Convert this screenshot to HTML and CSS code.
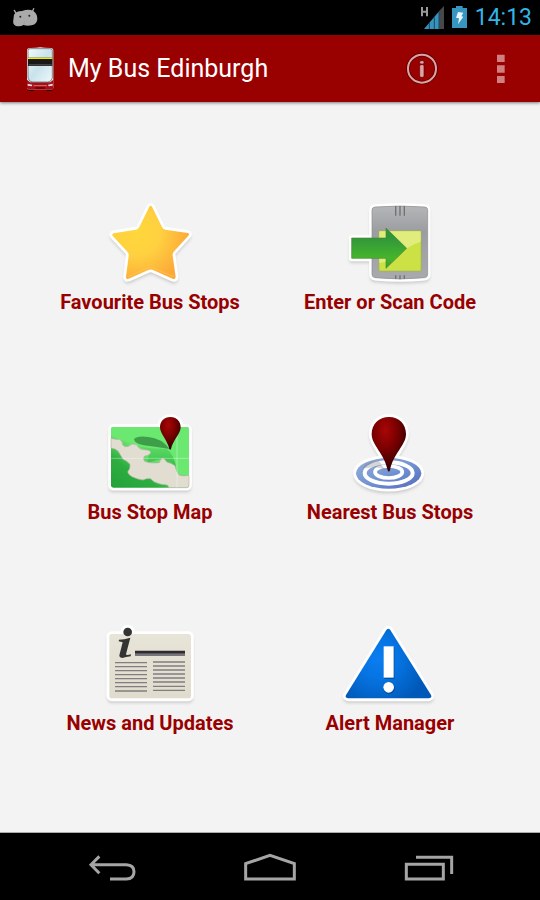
FILE: index.html
```html
<!DOCTYPE html>
<html lang="en">
<head>
<meta charset="utf-8">
<meta name="viewport" content="width=device-width, initial-scale=1">
<title>My Bus Edinburgh</title>
<link rel="stylesheet" href="styles.css">
</head>
<body>
<div class="status">
  <svg class="status-robot" viewBox="36 21 81 63" aria-hidden="true">
    <path d="M43 31l7 12M101 26l-5 11" stroke="#aaa" stroke-width="4" stroke-linecap="round"/>
    <path d="M42 44Q47 34 66 33Q86 26 100 33Q112 41 112 56Q112 72 95 76Q82 79 70 75Q62 81 48 78Q37 74 40 60Z" fill="#aaa"/>
    <circle cx="61" cy="50" r="3" fill="#222"/><circle cx="88" cy="47" r="3" fill="#222"/>
    <path d="M71 75Q74 70 73 64" fill="none" stroke="#999" stroke-width="2"/>
  </svg>
  <div class="status-right">
    <svg class="status-signal" viewBox="87 15 72 75" aria-hidden="true">
      <path d="M93 21v28M108 21v28M93 35h15" fill="none" stroke="#999" stroke-width="6"/>
      <path d="M145 32L159 18V87H145Z" fill="#484848"/>
      <path d="M99 87L145 33V87Z" fill="#3793bd"/>
      <path d="M115 69v18M130 52v35M144 35v52" stroke="#174a62" stroke-width="3"/>
    </svg>
    <svg class="status-battery" viewBox="183 15 45 75" aria-hidden="true">
      <path d="M195 18h20v6h13v60h-45V24h12z" fill="#3696bf"/>
      <path d="M201 36l16 2-6 11 6 1-16 23 3-18-9-2z" fill="#e9f5fa"/>
    </svg>
    <span class="clock">14:13</span>
  </div>
</div>
<header class="bar">
  <svg class="logo" viewBox="72 132 96 147" aria-hidden="true">
    <defs><linearGradient id="glass" x1="0" y1="0" x2="1" y2="1"><stop offset="0" stop-color="#f4fbfd"/><stop offset=".5" stop-color="#c9e2eb"/><stop offset="1" stop-color="#eef8fb"/></linearGradient></defs>
    <rect x="83" y="262" width="20" height="11" rx="4" fill="#260000"/><rect x="138" y="262" width="20" height="11" rx="4" fill="#260000"/>
    <path d="M81 150Q82 144 90 144L108 143Q121 140 134 143L152 144Q159 144 160 150V264Q159 269 152 269H90Q82 269 81 264Z" fill="#efeeee"/>
    <path d="M81 239L90 247H151L160 239V264Q159 269 152 269H90Q82 269 81 264Z" fill="#a60f19"/>
    <path d="M84 151Q85 146 92 146H149Q156 146 157 151V234Q154 246 143 246H98Q87 246 84 234Z" fill="url(#glass)" stroke="#46555b" stroke-width="2"/>
    <path d="M84 173h73v25H84z" fill="#181818"/><path d="M84 173h73v4H84z" fill="#f5ed00"/><path d="M86 192h69v5H86z" fill="#444"/>
    <path d="M83 251l14 3-2 5-12-2zM158 251l-14 3 2 5 12-2z" fill="#eadada"/>
    <path d="M100 257h41" stroke="#d86c70" stroke-width="3"/><path d="M106 264h29" stroke="#6b0006" stroke-width="5"/>
  </svg>
  <h1>My Bus Edinburgh</h1>
  <button class="action" aria-label="About">
    <svg class="info-icon" viewBox="48 159 93 93" aria-hidden="true">
      <circle cx="96" cy="206" r="42" fill="none" stroke="#5b0000" stroke-width="11"/>
      <circle cx="96" cy="206" r="42" fill="none" stroke="#dfa3a3" stroke-width="6"/>
      <rect x="89" y="182" width="13" height="10" rx="4" fill="#dfa3a3" stroke="#5b0000" stroke-width="2"/>
      <rect x="89" y="194" width="13" height="38" rx="4" fill="#dfa3a3" stroke="#5b0000" stroke-width="2"/>
    </svg>
  </button>
  <button class="action" aria-label="More options">
    <svg class="more-icon" viewBox="318 162 27 87" aria-hidden="true"><path d="M321 164h23v22h-23zM321 196h23v22h-23zM321 228h23v21h-23z" fill="#d17f7f"/></svg>
  </button>
</header>
<main class="grid">
  <button class="tile">
    <svg class="art" viewBox="165 27 270 270" aria-hidden="true">
      <defs><radialGradient id="gold" gradientUnits="userSpaceOnUse" cx="262" cy="125" r="155"><stop offset="0" stop-color="#ffd73b"/><stop offset=".45" stop-color="#ffd040"/><stop offset="1" stop-color="#fca938"/></radialGradient>
      <path id="star" d="M298 47Q302 42 306 47L336 108Q339 115 346 116L413 126Q420 128 415 134L371 182Q367 187 368 194L377 258Q376 266 368 263L309 237Q302 234 295 237L236 263Q228 266 228 258L236 194Q237 187 232 182L189 136Q184 129 191 127L258 116Q265 115 268 108Z"/></defs>
      <use href="#star" class="shade"/><use href="#star" class="rim"/><use href="#star" fill="url(#gold)"/>
      <path d="M234 257L293 231Q302 227 311 231L370 257" fill="none" stroke="#ffc65a" stroke-width="2"/>
    </svg>
    <span>Favourite Bus Stops</span>
  </button>
  <button class="tile">
    <svg class="art" viewBox="135 27 270 270" aria-hidden="true">
      <defs><linearGradient id="steel" x1="0" y1="0" x2="0" y2="1"><stop offset="0" stop-color="#b5b6b8"/><stop offset=".35" stop-color="#9c9da0"/><stop offset="1" stop-color="#a9aaad"/></linearGradient>
      <linearGradient id="leaf" x1="0" y1="0" x2="0" y2="1"><stop offset=".2" stop-color="#2f943b"/><stop offset=".75" stop-color="#46b52b"/><stop offset="1" stop-color="#349b31"/></linearGradient>
      <path id="device" d="M216 57Q216 49 225 48Q300 42 375 48Q383 49 383 57V250Q383 259 374 260Q300 268 225 260Q216 259 216 250Z"/>
      <path id="arrow" d="M155 141H258V111L320 172L258 232V202H155Z"/>
      <path id="shaft" d="M155 141H230V202H155Z"/></defs>
      <use href="#device" class="shade"/><use href="#shaft" class="shade"/><use href="#device" class="rim"/><use href="#shaft" class="rim"/>
      <use href="#device" fill="url(#steel)" stroke="#8c8d90" stroke-width="2"/>
      <path d="M287 45v29M300 45v29M313 45v29M287 253v11M300 253v12M313 253v11" stroke="#707174" stroke-width="4"/>
      <rect x="237" y="120" width="126" height="120" rx="3" fill="#cce244" stroke="#a5b83d" stroke-width="2"/>
      <path d="M238 121H362V152Q325 164 300 190Q270 213 238 216Z" fill="#e0ed7c"/>
      <use href="#arrow" fill="url(#leaf)" stroke="#4a8a36" stroke-width="2"/>
    </svg>
    <span>Enter or Scan Code</span>
  </button>
  <button class="tile">
    <svg class="art" viewBox="105 15 270 270" aria-hidden="true">
      <defs><linearGradient id="field" x1="0" y1="1" x2=".8" y2="0"><stop offset="0" stop-color="#23a13a"/><stop offset=".3" stop-color="#2dad40"/><stop offset=".55" stop-color="#65df69"/><stop offset="1" stop-color="#6ce971"/></linearGradient>
      <radialGradient id="ruby" cx=".4" cy=".25" r=".7"><stop offset="0" stop-color="#a90606"/><stop offset=".5" stop-color="#790000"/><stop offset="1" stop-color="#370000"/></radialGradient>
      <linearGradient id="hill" x1="0" y1="0" x2="0" y2="1"><stop offset="0" stop-color="#68e66e"/><stop offset="1" stop-color="#33b545"/></linearGradient>
      <rect id="sheet" x="123" y="66" width="234" height="182" rx="7"/>
      <path id="mappin" d="M301 36C320 36 332 50 332 67C332 86 308 107 303 132Q301 137 298 132C293 107 270 86 270 67C270 50 282 36 301 36Z"/></defs>
      <use href="#sheet" class="shade"/><use href="#sheet" class="rim"/><circle cx="301" cy="67" r="31" class="rim"/>
      <use href="#sheet" fill="url(#field)"/>
      <path d="M123 73Q123 66 130 66H350Q357 66 357 73V212L325 208L300 160Q230 150 170 111L123 94Z" fill="#6be870"/>
      <path d="M150 103Q205 133 290 132Q315 148 320 200L280 160L232 173L238 140L190 118Z" fill="url(#hill)"/>
      <path d="M192 103Q201 91 235 96Q274 99 299 132Q260 126 222 121Q194 116 192 103Z" fill="#3e9e49"/>
      <path d="M123 100Q136 104 148 103Q158 108 158 120Q165 128 175 124Q187 113 201 120Q207 134 220 134Q239 134 242 141Q241 151 224 153Q217 160 224 169Q239 176 268 173Q271 162 279 160Q285 162 290 171Q305 175 315 182Q319 200 327 210Q341 215 357 211V241Q357 248 350 248H296Q297 239 286 239Q273 239 264 235Q250 231 242 221Q229 219 219 225Q205 224 190 217Q176 211 173 201Q182 190 180 178Q171 167 159 163Q151 149 144 138Q136 130 123 129Z" fill="#e1ddd0" stroke="#b5b7a1" stroke-width="2"/>
      <path d="M123 160H357M321 66V248" stroke="#fff" stroke-opacity=".35" stroke-width="3"/>
      <use href="#mappin" fill="url(#ruby)"/>
    </svg>
    <span>Bus Stop Map</span>
  </button>
  <button class="tile">
    <svg class="art" viewBox="135 15 270 270" aria-hidden="true">
      <defs><linearGradient id="water" x1="0" y1="0" x2="1" y2="1"><stop offset="0" stop-color="#96b1d6"/><stop offset=".5" stop-color="#7494d3"/><stop offset="1" stop-color="#5269bd"/></linearGradient>
      <ellipse id="pool" cx="266" cy="205" rx="98" ry="46"/>
      <path id="bigpin" d="M267 36C297 36 318 58 318 87C318 121 279 146 270 196Q267 204 263 196C254 146 215 121 215 87C215 58 237 36 267 36Z"/></defs>
      <use href="#pool" class="shade"/><use href="#bigpin" class="shade"/><use href="#pool" class="rim"/><use href="#bigpin" class="rim"/>
      <use href="#pool" fill="url(#water)"/>
      <ellipse cx="266" cy="204" rx="72" ry="32" fill="none" stroke="#fff" stroke-width="12"/>
      <ellipse cx="266" cy="201" rx="41" ry="18" fill="none" stroke="#fff" stroke-width="11"/>
      <path d="M187 190Q196 170 236 166L256 196Q230 181 201 190Z" fill="#777" fill-opacity=".3"/>
      <use href="#bigpin" fill="url(#ruby)"/>
    </svg>
    <span>Nearest Bus Stops</span>
  </button>
  <button class="tile">
    <svg class="art" viewBox="135 18 270 270" aria-hidden="true">
      <defs><linearGradient id="paper" x1="0" y1="0" x2="0" y2="1"><stop offset="0" stop-color="#e7e4d8"/><stop offset="1" stop-color="#e0dccd"/></linearGradient>
      <rect id="page" x="148" y="57" width="245" height="193" rx="8"/></defs>
      <use href="#page" class="shade"/><use href="#page" class="rim"/><circle cx="203" cy="51" r="13" class="rim"/>
      <use href="#page" fill="url(#paper)"/>
      <circle cx="203" cy="51" r="13" fill="#333"/>
      <path d="M177 74Q192 74 211 68L198 118Q198 122 213 118L212 124Q197 126 187 129Q175 128 179 117L188 82L176 79Z" fill="#333"/>
      <path d="M225 107h150v9H225z" fill="#2c2a2e"/><path d="M225 117h150v6H225z" fill="#77747b"/>
      <path d="M165 143h96M165 155h96M165 167h96M165 179h96M165 191h96M165 203h96M165 215h96M165 228h96M279 141h96M279 153h96M279 165h96M279 177h96M279 189h96M279 201h96M279 214h96M279 226h96" stroke="#817d80" stroke-width="4"/>
    </svg>
    <span>News and Updates</span>
  </button>
  <button class="tile">
    <svg class="art" viewBox="105 18 270 270" aria-hidden="true">
      <defs><radialGradient id="sea" gradientUnits="userSpaceOnUse" cx="205" cy="130" r="150"><stop offset="0" stop-color="#0b7df0"/><stop offset=".4" stop-color="#0674e2"/><stop offset="1" stop-color="#0059b8"/></radialGradient>
      <path id="tri" d="M229 45Q235 37 241 45L363 240Q367 248 357 250H114Q104 248 108 240Z"/></defs>
      <use href="#tri" class="shade"/><use href="#tri" class="rim"/><use href="#tri" fill="url(#sea)"/>
      <rect x="223" y="96" width="30" height="95" fill="#00428d"/><circle cx="237" cy="219" r="17" fill="#00428d"/>
      <rect x="221" y="94" width="30" height="94" fill="#fff"/><circle cx="236" cy="217" r="16" fill="#fff"/>
    </svg>
    <span>Alert Manager</span>
  </button>
</main>
<nav class="nav">
  <button aria-label="Back"><svg viewBox="75 78 162 93" aria-hidden="true"><path d="M118 94L93 119L118 145M93 119H199Q222 120 222 140Q222 161 199 162H150" fill="none" stroke="#a5a5a5" stroke-width="9"/></svg></button>
  <button aria-label="Home"><svg viewBox="549 78 162 93" aria-hidden="true"><path d="M557 162V116L630 91L703 116V162Z" fill="none" stroke="#a5a5a5" stroke-width="9"/></svg></button>
  <button aria-label="Recent apps"><svg viewBox="1023 78 162 93" aria-hidden="true"><path d="M1039 118H1150V162H1039ZM1068 97H1175V147" fill="none" stroke="#a5a5a5" stroke-width="9"/></svg></button>
</nav>
</body>
</html>
```
FILE: styles.css
```css
* {
  box-sizing: border-box;
}

body {
  margin: 0;
  min-height: 100vh;
  display: flex;
  flex-direction: column;
  background: #f3f3f3;
  font-family: Roboto, "Liberation Sans", sans-serif;
}

svg {
  display: block;
  flex: none;
}

button {
  margin: 0;
  padding: 0;
  border: 0;
  background: none;
  font: inherit;
  cursor: pointer;
}

.status {
  height: 35px;
  padding: 0 8px 0 12px;
  display: flex;
  align-items: center;
  justify-content: space-between;
  background: #000;
}

.status-right {
  display: flex;
  align-items: center;
  gap: 8px;
}

.status-robot {
  width: 27px;
  height: 21px;
}

.status-signal {
  width: 24px;
  height: 25px;
}

.status-battery {
  width: 15px;
  height: 25px;
}

.clock {
  color: #33b5e5;
  font-size: 23px;
  line-height: 35px;
}

.bar {
  height: 67px;
  padding-left: 24px;
  display: flex;
  align-items: center;
  background: #990000;
  box-shadow: 0 1px 3px rgba(0, 0, 0, 0.5);
}

.logo {
  width: 32px;
  height: 49px;
}

.bar h1 {
  flex: 1;
  margin: 0 0 0 12px;
  color: #fff;
  font-size: 25px;
  font-weight: 400;
  line-height: 32px;
  white-space: nowrap;
}

.action {
  width: 79px;
  height: 100%;
  display: flex;
  align-items: center;
  justify-content: center;
}

.info-icon {
  width: 31px;
  height: 31px;
  overflow: visible;
}

.more-icon {
  width: 9px;
  height: 29px;
}

.grid {
  flex: 1;
  padding: 50px 30px 48px;
  display: grid;
  grid-template-columns: 1fr 1fr;
  grid-auto-rows: 1fr;
}

.tile {
  display: flex;
  flex-direction: column;
  align-items: center;
  justify-content: center;
  color: #990000;
  font-size: 20px;
  font-weight: 700;
  line-height: 25px;
  white-space: nowrap;
}

.art {
  width: 90px;
  height: 90px;
  overflow: visible;
}

.rim {
  fill: #fff;
  stroke: #fff;
  stroke-width: 17px;
  stroke-linejoin: round;
}

.shade {
  fill: #ccc;
  stroke: #ccc;
  stroke-width: 12px;
  stroke-linejoin: round;
  transform: translateY(8px);
  filter: blur(4px);
}

.nav {
  height: 68px;
  padding: 0 33px;
  display: grid;
  grid-template-columns: repeat(3, 1fr);
  background: #000;
  border-top: 1px solid #aaa;
}

.nav button {
  display: flex;
  align-items: center;
  justify-content: center;
}

.nav svg {
  width: 54px;
  height: 31px;
}
```
